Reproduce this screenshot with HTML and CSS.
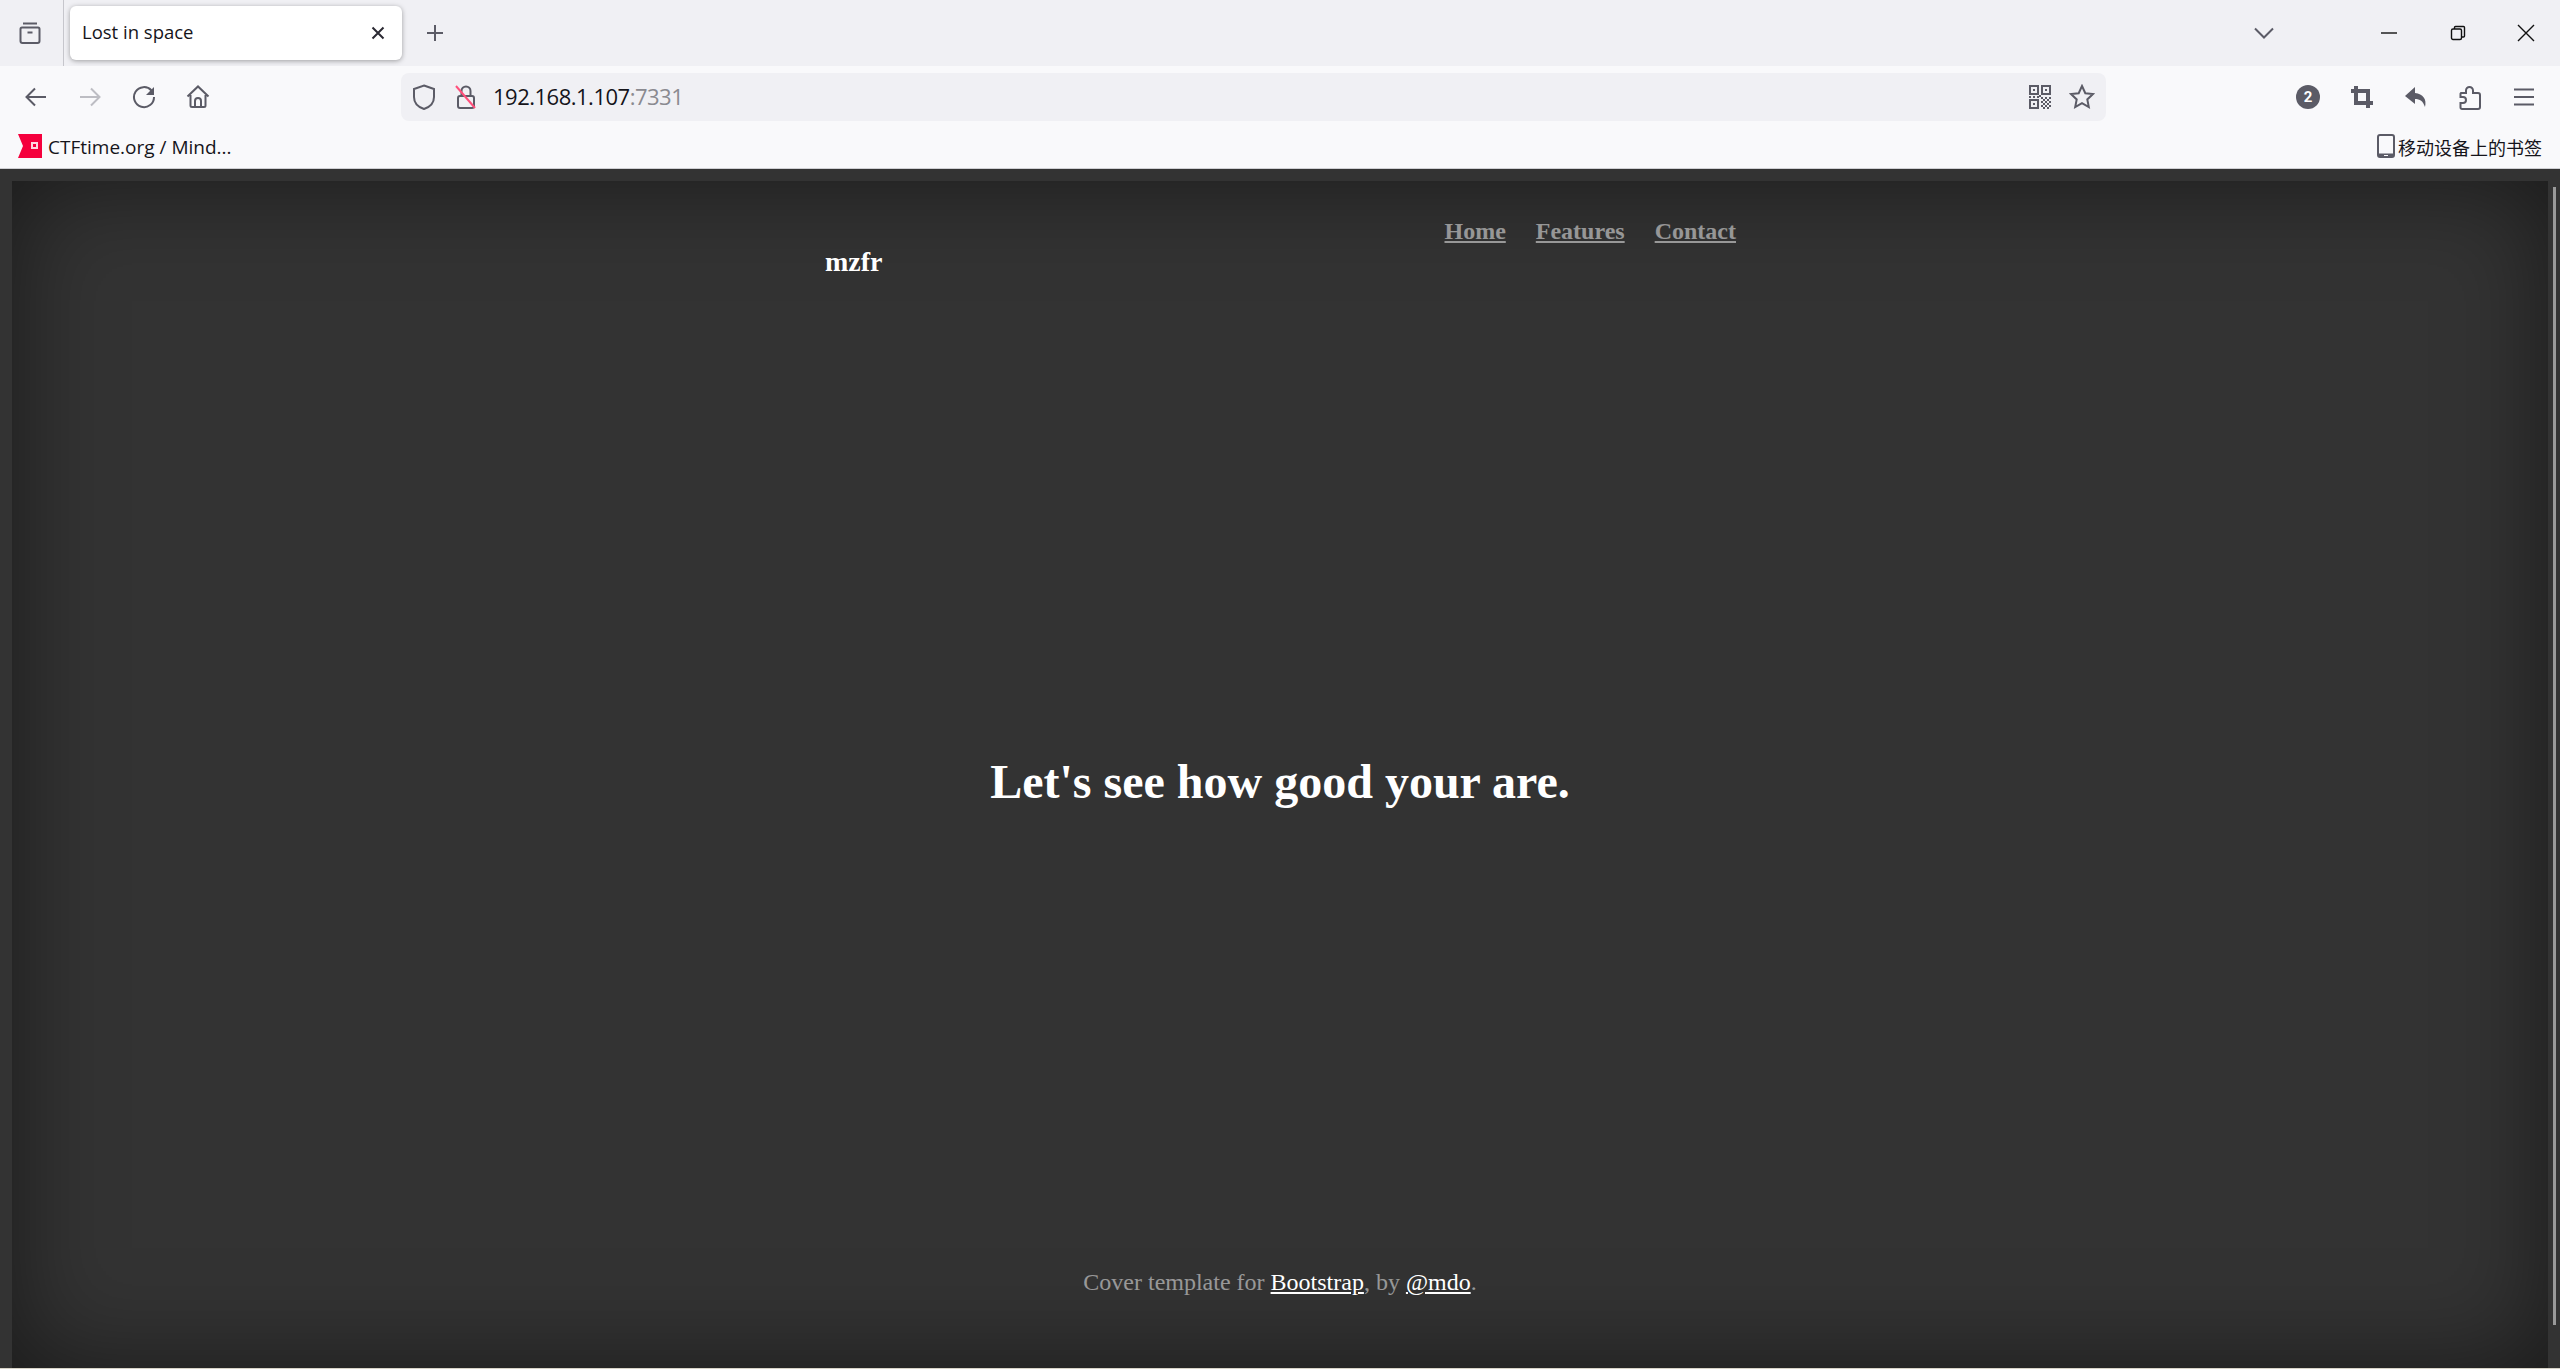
FILE: index.html
```html
<!DOCTYPE html>
<html lang="en">
<head>
<meta charset="utf-8">
<title>Lost in space</title>
<link rel="stylesheet" href="styles.css">
</head>
<body>
<div class="browser">
  <header class="tabstrip">
    <div class="tabs-btn">
      <svg width="24" height="24" viewBox="0 0 24 24" class="ico"><path d="M5 2.500h14M2.500 8a1.500 1.500 0 0 1 1.500-1.500h16a1.500 1.500 0 0 1 1.500 1.500v12a2 2 0 0 1-2 2h-15a2 2 0 0 1-2-2zM9.500 11.500h5"/></svg>
    </div>
    <div class="tab">
      <span class="tab-title">Lost in space</span>
      <svg width="16" height="16" viewBox="0 0 16 16" class="ico dark"><path d="M2.500 2.500l11 11M13.500 2.500l-11 11"/></svg>
    </div>
    <div class="newtab"><svg width="20" height="20" viewBox="0 0 20 20" class="ico"><path d="M10 2v16M2 10h16"/></svg></div>
    <div class="strip-spacer"></div>
    <div class="listall"><svg width="20" height="12" viewBox="0 0 20 12" class="ico"><path d="M1 1.500l9 9 9-9"/></svg></div>
    <div class="winbtn"><svg width="16" height="16" viewBox="0 0 16 16" class="ico black"><path d="M0 8h16"/></svg></div>
    <div class="winbtn"><svg width="16" height="16" viewBox="0 0 16 16" class="ico black"><rect x="1.500" y="4" width="10" height="10.500" rx="1.500"/><path d="M4.500 4V2.500a1 1 0 0 1 1-1h8a1 1 0 0 1 1 1V11a1 1 0 0 1-1 1h-2"/></svg></div>
    <div class="winbtn"><svg width="18" height="18" viewBox="0 0 18 18" class="ico black"><path d="M1 1l16 16M17 1L1 17"/></svg></div>
  </header>

  <nav class="toolbar">
    <div class="tbtn"><svg width="24" height="24" viewBox="0 0 24 24" class="ico"><path d="M22 12H3M11 3.500L2.500 12l8.500 8.500"/></svg></div>
    <div class="tbtn"><svg width="24" height="24" viewBox="0 0 24 24" class="ico faint"><path d="M2 12h19M13 3.500l8.500 8.500-8.500 8.500"/></svg></div>
    <div class="tbtn"><svg width="24" height="24" viewBox="0 0 24 24" class="ico"><path d="M19.500 5.500A10 10 0 1 0 22 12"/><path class="fill" d="M22 2v8h-8z"/></svg></div>
    <div class="tbtn"><svg width="24" height="24" viewBox="0 0 24 24" class="ico"><path d="M1.500 11.500L12 1.500l10.500 10M4.500 10v10.500a1.500 1.500 0 0 0 1.500 1.500h12a1.500 1.500 0 0 0 1.500-1.500V10M9 22v-6a3 3 0 0 1 6 0v6"/></svg></div>
    <div class="urlbar">
      <svg width="24" height="26" viewBox="0 0 24 26" class="ico shield"><path d="M12 1.500L22 5v8c0 6-4 10-10 12C6 23 2 19 2 13V5z"/></svg>
      <svg width="22" height="26" viewBox="0 0 22 26" class="lock"><path class="lock-body" d="M3 14a2 2 0 0 1 2-2h12a2 2 0 0 1 2 2v8a2 2 0 0 1-2 2H5a2 2 0 0 1-2-2zM6.500 12V7a4.500 4.500 0 0 1 9 0v5"/><path class="lock-slash" d="M1 2l19 22"/></svg>
      <span class="url"><span class="host">192.168.1.107</span><span class="port">:7331</span></span>
      <span class="url-spacer"></span>
      <svg width="22" height="24" viewBox="0 0 22 24" class="qr">
        <path d="M0 0h10v10H0zM2 2v6h6V2zM12 0h10v10H12zM14 2v6h6V2zM0 14h10v10H0zM2 16v6h6v-6z" fill-rule="evenodd"/>
        <path d="M4 4h2v2H4zM16 4h2v2h-2zM4 18h2v2H4zM10 10h2v2h-2zM0 11h2v2H0zM4 11h2v2H4zM8 11h2v2H8zM12 12h2v2h-2zM16 12h2v2h-2zM20 12h2v2h-2zM14 14h2v2h-2zM18 14h2v2h-2zM12 16h2v2h-2zM16 16h2v2h-2zM20 16h2v2h-2zM14 18h2v2h-2zM18 18h2v2h-2zM12 20h2v2h-2zM16 20h2v2h-2zM20 20h2v2h-2zM14 22h2v2h-2zM18 22h2v2h-2z"/>
      </svg>
      <svg width="26" height="26" viewBox="0 0 26 26" class="ico star"><path d="M13 2l3.300 7.200 7.700.9-5.700 5.300 1.500 7.700L13 19.200l-6.800 3.900 1.500-7.700L2 10.100l7.700-.9z"/></svg>
    </div>
    <div class="tbtn tbtn-first"><span class="badge">2</span></div>
    <div class="tbtn"><svg width="24" height="24" viewBox="0 0 24 24" class="ico thick"><path d="M6 1v17h17M1 6h17v17"/></svg></div>
    <div class="tbtn"><svg width="24" height="24" viewBox="0 0 24 24"><path class="fill" d="M11 2L1 11l10 8v-5c5 0 8 2 10 8 2-8-2-13-10-14z"/></svg></div>
    <div class="tbtn"><svg width="24" height="26" viewBox="0 0 24 26" class="ico"><path d="M3 9h5V6.500a3.500 3.500 0 0 1 7 0V9h5a2 2 0 0 1 2 2v12a2 2 0 0 1-2 2H4a1.500 1.500 0 0 1-1.500-1.500V19H5a3 3 0 0 0 0-6H2.500v-2.500A1.500 1.500 0 0 1 3 9z"/></svg></div>
    <div class="tbtn"><svg width="24" height="20" viewBox="0 0 24 20" class="ico"><path d="M2 2.500h20M2 10h20M2 17.500h20"/></svg></div>
  </nav>

  <div class="bookmarks">
    <div class="bookmark">
      <svg width="24" height="24" viewBox="0 0 24 24" class="flag"><path class="flag-red" d="M0 0h24v24H0l5-12z"/><rect class="flag-white" x="13" y="8" width="7" height="7"/><rect class="flag-red" x="15" y="10" width="3" height="3"/></svg>
      <span class="bm-label">CTFtime.org / Mind...</span>
    </div>
    <div class="bookmark mobile">
      <svg width="18" height="24" viewBox="0 0 18 24" class="phone"><path fill-rule="evenodd" d="M3 0h12a3 3 0 0 1 3 3v18a3 3 0 0 1-3 3H3a3 3 0 0 1-3-3V3a3 3 0 0 1 3-3zM2 3v16.500h14V3a1 1 0 0 0-1-1H3a1 1 0 0 0-1 1zM7 21v1h4v-1z"/></svg>
      <span class="bm-label">移动设备上的书签</span>
    </div>
  </div>

  <main class="page">
    <div class="cover">
      <div class="masthead">
        <h3 class="brand">mzfr</h3>
        <ul class="mast-nav">
          <li><a href="#">Home</a></li>
          <li><a href="#">Features</a></li>
          <li><a href="#">Contact</a></li>
        </ul>
      </div>
      <div class="hero"><h1>Let's see how good your are.</h1></div>
      <p class="footer">Cover template for <a href="#">Bootstrap</a>, by <a href="#">@mdo</a>.</p>
    </div>
    <div class="scroll-thumb"></div>
  </main>
</div>
</body>
</html>
```
FILE: styles.css
```css
* { box-sizing: border-box; }
html, body { margin: 0; padding: 0; height: 100%; overflow: hidden; }
body { font-family: "Open Sans", "Noto Sans CJK SC", sans-serif; color: #15141a; background: #d8d4c8; }
svg { display: block; flex: none; }

.browser { display: flex; flex-direction: column; height: 1368px; }

.ico { fill: none; stroke: #5b5b66; stroke-width: 2; }
.ico.dark { stroke: #2b2a33; }
.ico.black { stroke: #111; stroke-width: 1.400; }
.ico.faint { stroke: #bdbdc3; }
.ico.thick { stroke-width: 4; }
.fill { fill: #5b5b66; stroke: none; }

.tabstrip { display: flex; align-items: center; height: 66px; background: #f0f0f4; }
.tabs-btn { display: flex; justify-content: center; align-items: center; width: 64px; height: 66px; padding-right: 4px; border-right: 1px solid #c6c6cc; }
.tab { display: flex; align-items: center; justify-content: space-between; width: 332px; height: 54px; margin-left: 6px; padding: 0 16px 0 12px; background: #fff; border-radius: 6px; box-shadow: 0 1px 5px rgba(0,0,0,.35); }
.tab-title { font-size: 18.500px; line-height: 24px; padding-bottom: 2px; }
.newtab { display: flex; justify-content: center; width: 65px; }
.strip-spacer { flex: 1; }
.listall { width: 20px; margin-right: 80px; }
.winbtn { display: flex; justify-content: center; width: 69px; }
.winbtn:last-child { width: 68px; }

.toolbar { display: flex; align-items: center; height: 56px; padding: 0 9px; background: #f9f9fb; }
.tbtn { display: flex; justify-content: center; align-items: center; width: 54px; height: 48px; margin-top: 6px; }
.tbtn-first { margin-left: 175px; }
.urlbar { display: flex; align-items: center; width: 1705px; height: 48px; margin-left: 176px; margin-top: 6px; padding: 0 11px; background: #f0f0f4; border-radius: 8px; }
.shield { margin-right: 19px; }
.lock { margin-right: 16px; }
.lock-body { fill: none; stroke: #5b5b66; stroke-width: 2; }
.lock-slash { fill: none; stroke: #ff4f7b; stroke-width: 2; }
.url { font-size: 22px; line-height: 28px; letter-spacing: -.5px; white-space: nowrap; padding-bottom: 2px; }
.host { color: #15141a; }
.port { color: #8a8a90; }
.url-spacer { flex: 1; }
.qr { fill: #5b5b66; margin-right: 18px; }
.badge { display: flex; justify-content: center; align-items: center; width: 24px; height: 24px; border-radius: 50%; background: #5b5b66; color: #fff; font: 700 15px/1 Roboto, sans-serif; }

.bookmarks { display: flex; justify-content: space-between; align-items: center; height: 47px; padding: 2px 18px 0; background: #f9f9fb; border-bottom: 1px solid #cfcfd3; }
.bookmark { display: flex; align-items: center; gap: 6px; font-size: 19px; white-space: nowrap; }
.bm-label { padding-top: 2px; }
.bookmark.mobile { gap: 3px; font-size: 18px; }
.flag-red { fill: #f5003d; }
.flag-white { fill: #ffd7e0; }
.phone { fill: #5b5b66; }

.page { position: relative; flex: 1; padding: 12px 12px 0; background: #333; font-family: "Liberation Serif", "Times New Roman", serif; }
.cover { display: flex; flex-direction: column; height: 100%; color: #fff; box-shadow: inset 0 0 100px rgba(0,0,0,.5); }
.masthead { display: flex; justify-content: space-between; width: 912px; margin: 0 auto; padding: 34px 0 0 1px; }
.brand { margin: 31px 0 0; font-size: 28px; line-height: 32px; font-weight: 700; }
.mast-nav { display: flex; gap: 30px; margin: 0; padding: 0; list-style: none; font-size: 24px; line-height: 32px; font-weight: 700; }
.mast-nav a { color: rgba(255,255,255,.5); }
.hero { flex: 1; display: flex; justify-content: center; align-items: center; padding-top: 17px; }
.hero h1 { margin: 0; font-size: 48px; line-height: 56px; font-weight: 700; }
.footer { margin: 0 0 72px; text-align: center; font-size: 24px; line-height: 28px; color: rgba(255,255,255,.5); }
.footer a { color: #fff; }
.scroll-thumb { position: absolute; right: 4px; top: 18px; width: 3px; height: 1138px; background: #999; }
```
